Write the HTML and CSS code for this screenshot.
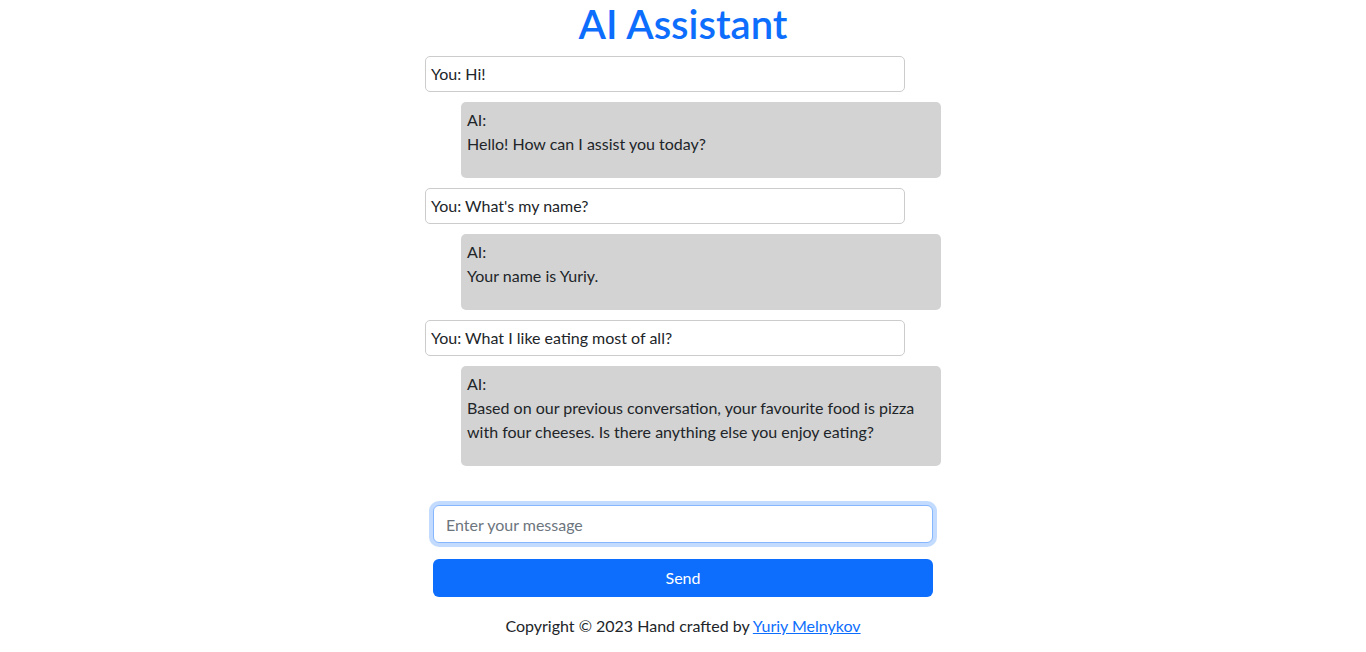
FILE: index.html
```html
<!DOCTYPE html>
<html lang="en">
<head>
<meta charset="utf-8">
<title>AI Assistant</title>
<link rel="stylesheet" href="styles.css">
</head>
<body>
<main class="app">
  <h1 class="title">AI Assistant</h1>
  <div class="chat">
    <div class="msg user">You: Hi!</div>
    <div class="msg ai">AI:<br>Hello! How can I assist you today?<p class="gap"></p></div>
    <div class="msg user">You: What's my name?</div>
    <div class="msg ai">AI:<br>Your name is Yuriy.<p class="gap"></p></div>
    <div class="msg user">You: What I like eating most of all?</div>
    <div class="msg ai">AI:<br>Based on our previous conversation, your favourite food is pizza with four cheeses. Is there anything else you enjoy eating?<p class="gap"></p></div>
  </div>
  <form class="composer">
    <input class="input" type="text" placeholder="Enter your message">
    <button class="send" type="button">Send</button>
  </form>
  <footer class="footer">Copyright © 2023 Hand crafted by <a href="#">Yuriy Melnykov</a></footer>
</main>
</body>
</html>
```
FILE: styles.css
```css
* { box-sizing: border-box; }
html, body { margin: 0; padding: 0; background: #fff; }
body {
  font-family: "Lato", "Noto Sans", sans-serif;
  font-size: 16px;
  line-height: 24px;
  color: #212529;
}
.app {
  display: flex;
  flex-direction: column;
  align-items: center;
}
.title {
  margin: 0 0 8px;
  font-size: 40px;
  line-height: 48px;
  font-weight: 600;
  color: #0d6efd;
}
.chat {
  width: 516px;
  display: flex;
  flex-direction: column;
  gap: 10px;
}
.msg {
  width: 480px;
  padding: 6px;
  border-radius: 5px;
}
.user {
  border: 1px solid #ccc;
  padding: 5px;
}
.ai {
  margin-left: 36px;
  background: #d3d3d3;
}
.gap { margin: 0 0 16px; }
.composer {
  width: 500px;
  margin-top: 39px;
  display: flex;
  flex-direction: column;
  gap: 16px;
}
.input {
  height: 38px;
  padding: 6px 12px;
  font: inherit;
  color: #212529;
  border: 1px solid #86b7fe;
  border-radius: 6px;
  box-shadow: 0 0 0 4px rgba(13,110,253,.25);
  outline: none;
}
.input::placeholder { color: #6c757d; }
.send {
  height: 38px;
  border: none;
  border-radius: 6px;
  background: #0d6efd;
  color: #fff;
  font: inherit;
}
.footer {
  margin-top: 17px;
  text-align: center;
}
.footer a { color: #0d6efd; }
```
